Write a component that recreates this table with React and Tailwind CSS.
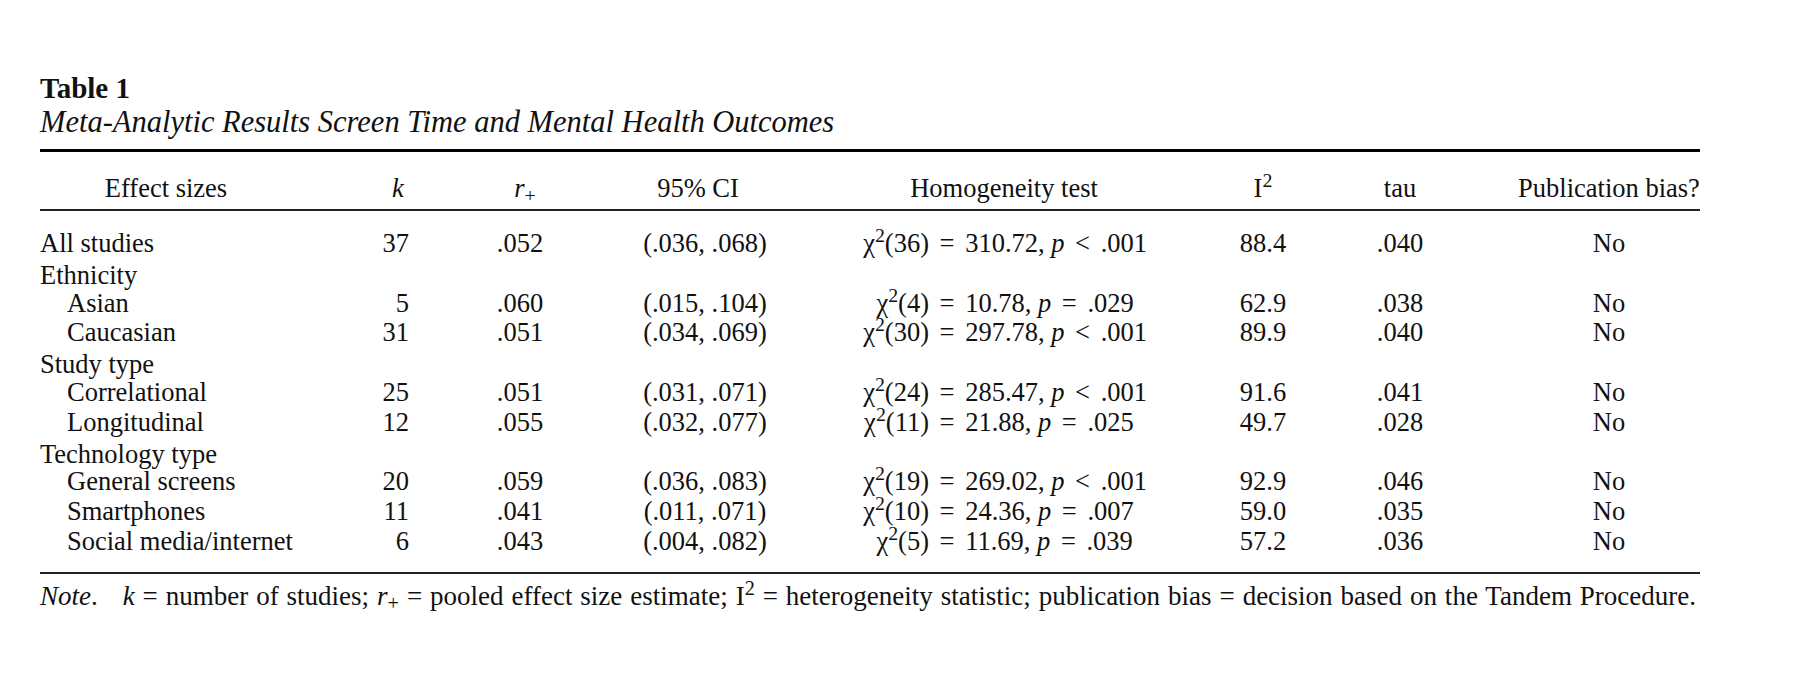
import React from "react";

const rows = [
  { label: "All studies", k: "37", r: ".052", ci: "(.036, .068)", df: "36", chi: "310.72", op: "<", p: ".001", i2: "88.4", tau: ".040", pub: "No" },
  { group: "Ethnicity" },
  { label: "Asian", sub: true, k: "5", r: ".060", ci: "(.015, .104)", df: "4", chi: "10.78", op: "=", p: ".029", i2: "62.9", tau: ".038", pub: "No" },
  { label: "Caucasian", sub: true, k: "31", r: ".051", ci: "(.034, .069)", df: "30", chi: "297.78", op: "<", p: ".001", i2: "89.9", tau: ".040", pub: "No" },
  { group: "Study type" },
  { label: "Correlational", sub: true, k: "25", r: ".051", ci: "(.031, .071)", df: "24", chi: "285.47", op: "<", p: ".001", i2: "91.6", tau: ".041", pub: "No" },
  { label: "Longitudinal", sub: true, k: "12", r: ".055", ci: "(.032, .077)", df: "11", chi: "21.88", op: "=", p: ".025", i2: "49.7", tau: ".028", pub: "No" },
  { group: "Technology type" },
  { label: "General screens", sub: true, k: "20", r: ".059", ci: "(.036, .083)", df: "19", chi: "269.02", op: "<", p: ".001", i2: "92.9", tau: ".046", pub: "No" },
  { label: "Smartphones", sub: true, k: "11", r: ".041", ci: "(.011, .071)", df: "10", chi: "24.36", op: "=", p: ".007", i2: "59.0", tau: ".035", pub: "No" },
  { label: "Social media/internet", sub: true, k: "6", r: ".043", ci: "(.004, .082)", df: "5", chi: "11.69", op: "=", p: ".039", i2: "57.2", tau: ".036", pub: "No" },
];

const cols = "grid grid-cols-[308px_100px_154px_192px_420px_98px_206px_182px]";

// chi-square test, lined up on the "=" sign
const Homogeneity = ({ row }) => (
  <div className="flex whitespace-nowrap">
    <span className="w-[135px] text-right">
      χ<sup>2</sup>({row.df})
    </span>
    <span className="ml-[0.4em]">
      =<span className="ml-[0.4em]">{row.chi},</span> <i>p</i>
      <span className="mx-[0.4em]">{row.op}</span>
      {row.p}
    </span>
  </div>
);

export default function App() {
  return (
    <div className="min-h-[696px] bg-white px-[40px] pt-[71px] text-[#111] font-['Liberation_Serif','Times_New_Roman',serif]">
      <div className="w-[1660px]">
        <h1 className="text-[29px] leading-[34px] font-bold">Table 1</h1>
        <p className="text-[30.5px] leading-[34px] italic">
          Meta-Analytic Results Screen Time and Mental Health Outcomes
        </p>

        <div className="mt-[10px] h-[3px] bg-black" />

        {/* Column headers */}
        <div className={`${cols} mt-[21px] text-[26.5px] leading-[30px]`}>
          <div className="w-[252px] text-center">Effect sizes</div>
          <div className="text-center italic">k</div>
          <div className="text-center">
            <i>r</i>
            <sub>+</sub>
          </div>
          <div className="text-center">95% CI</div>
          <div className="text-center">Homogeneity test</div>
          <div className="text-center">
            I<sup>2</sup>
          </div>
          <div className="pr-[30px] text-center">tau</div>
          <div className="text-center">Publication bias?</div>
        </div>

        <div className="mt-[6px] h-[2px] bg-[#222]" />

        {/* Body */}
        <div className={`${cols} mt-[18px] text-[26.5px] leading-[29.8px]`}>
          {rows.map((row, i) =>
            row.group ? (
              <div key={i} className="col-span-8 pt-[3px] leading-[26.8px]">
                {row.group}
              </div>
            ) : (
              <React.Fragment key={i}>
                <div className={row.sub ? "pl-[27px]" : ""}>{row.label}</div>
                <div className="pr-[39px] text-right">{row.k}</div>
                <div className="pr-[10px] text-center">{row.r}</div>
                <div className="pl-[14px] text-center">{row.ci}</div>
                <Homogeneity row={row} />
                <div className="text-center">{row.i2}</div>
                <div className="pr-[30px] text-center">{row.tau}</div>
                <div className="text-center">{row.pub}</div>
              </React.Fragment>
            )
          )}
        </div>

        <div className="mt-[15px] h-[2px] bg-[#222]" />

        <p className="mt-[8px] w-[1656px] whitespace-nowrap text-[27px] leading-[28px] text-justify [text-align-last:justify]">
          <i>Note</i>.<span className="inline-block w-[17px]" /> <i>k</i> = number of studies; <i>r</i>
          <sub>+</sub> = pooled effect size estimate; I<sup>2</sup> = heterogeneity statistic; publication bias =
          decision based on the Tandem Procedure.
        </p>
      </div>
    </div>
  );
}
